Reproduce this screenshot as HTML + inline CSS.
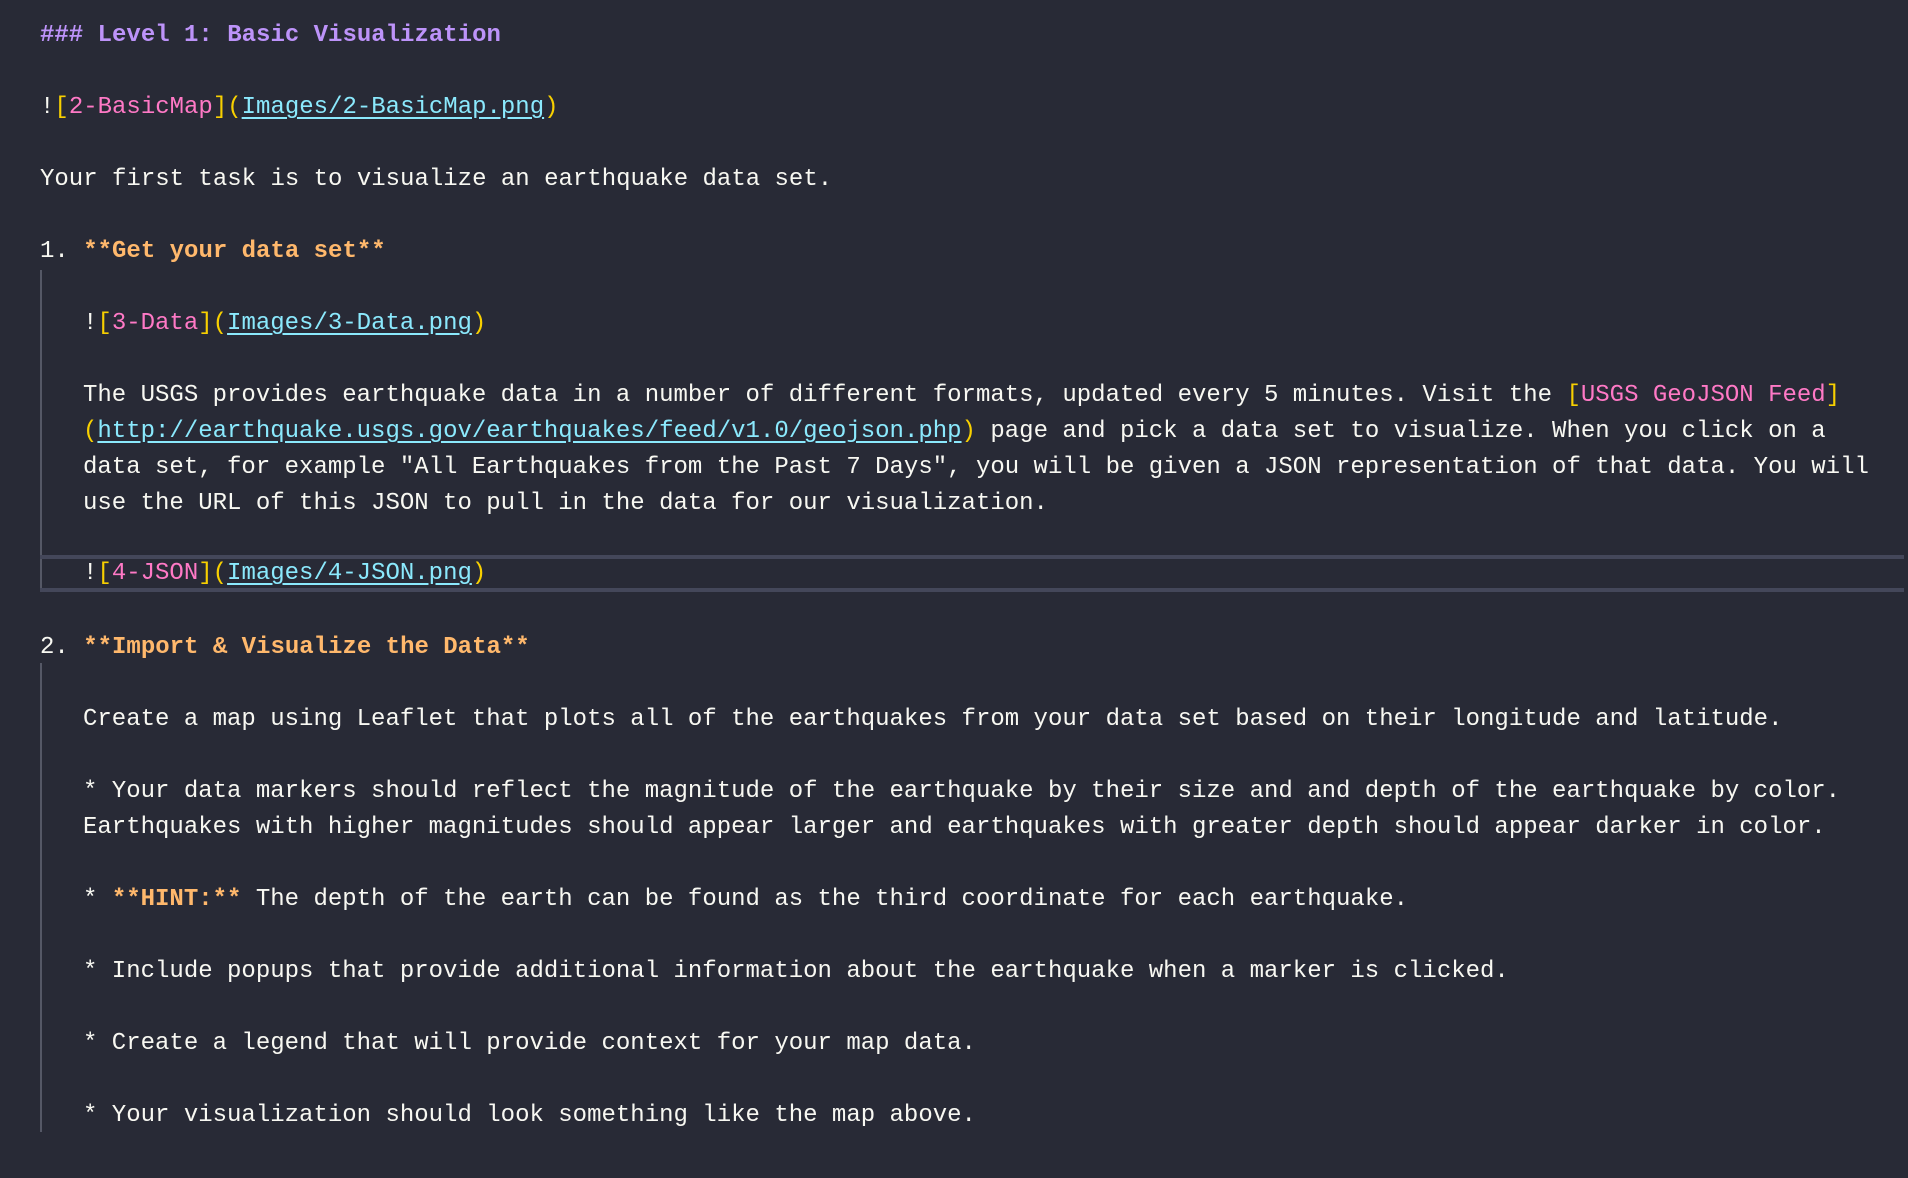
<!DOCTYPE html>
<html><head><meta charset="utf-8"><style>
html,body{margin:0;padding:0;background:#282a36;width:1908px;height:1178px;overflow:hidden}
.l{position:absolute;left:40px;height:36px;line-height:36px;font-family:"Liberation Mono",monospace;font-size:24px;color:#f8f8f2;white-space:pre;margin-top:3px}
.i{left:83px}
.h{color:#bd93f9;font-weight:bold}
.p{color:#ff79c6}
.y{color:#f8d000}
.c{color:#8be9fd;text-decoration:underline;text-underline-offset:4px}
.o{color:#ffb86c;font-weight:bold}
.bar{position:absolute;left:40px;width:2px;background:#555866}
.hl{position:absolute;left:40px;width:1864px;height:4px;background:#44475a}
</style></head><body>
<div class="bar" style="top:270px;height:321px"></div>
<div class="bar" style="top:663px;height:469px"></div>
<div class="hl" style="top:555px"></div>
<div class="hl" style="top:588px"></div>
<div class="l h" style="top:15px">### Level 1: Basic Visualization</div>
<div class="l" style="top:87px">!<span class="y">[</span><span class="p">2-BasicMap</span><span class="y">](</span><span class="c">Images/2-BasicMap.png</span><span class="y">)</span></div>
<div class="l" style="top:159px">Your first task is to visualize an earthquake data set.</div>
<div class="l" style="top:231px">1. <span class="o">**Get your data set**</span></div>
<div class="l i" style="top:303px">!<span class="y">[</span><span class="p">3-Data</span><span class="y">](</span><span class="c">Images/3-Data.png</span><span class="y">)</span></div>
<div class="l i" style="top:375px">The USGS provides earthquake data in a number of different formats, updated every 5 minutes. Visit the <span class="y">[</span><span class="p">USGS GeoJSON Feed</span><span class="y">]</span></div>
<div class="l i" style="top:411px"><span class="y">(</span><span class="c">http://earthquake.usgs.gov/earthquakes/feed/v1.0/geojson.php</span><span class="y">)</span> page and pick a data set to visualize. When you click on a</div>
<div class="l i" style="top:447px">data set, for example "All Earthquakes from the Past 7 Days", you will be given a JSON representation of that data. You will</div>
<div class="l i" style="top:483px">use the URL of this JSON to pull in the data for our visualization.</div>
<div class="l i" style="top:553px">!<span class="y">[</span><span class="p">4-JSON</span><span class="y">](</span><span class="c">Images/4-JSON.png</span><span class="y">)</span></div>
<div class="l" style="top:627px">2. <span class="o">**Import &amp; Visualize the Data**</span></div>
<div class="l i" style="top:699px">Create a map using Leaflet that plots all of the earthquakes from your data set based on their longitude and latitude.</div>
<div class="l i" style="top:771px">* Your data markers should reflect the magnitude of the earthquake by their size and and depth of the earthquake by color.</div>
<div class="l i" style="top:807px">Earthquakes with higher magnitudes should appear larger and earthquakes with greater depth should appear darker in color.</div>
<div class="l i" style="top:879px">* <span class="o">**HINT:**</span> The depth of the earth can be found as the third coordinate for each earthquake.</div>
<div class="l i" style="top:951px">* Include popups that provide additional information about the earthquake when a marker is clicked.</div>
<div class="l i" style="top:1023px">* Create a legend that will provide context for your map data.</div>
<div class="l i" style="top:1095px">* Your visualization should look something like the map above.</div>
</body></html>
